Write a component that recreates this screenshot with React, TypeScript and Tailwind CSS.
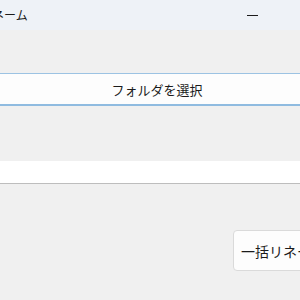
export default function App() {
  return (
    <div
      className="flex h-[300px] w-[300px] flex-col overflow-hidden bg-[#f0f0f0] text-[#1b1b1b]"
      style={{ fontFamily: '"Noto Sans CJK JP", "Noto Sans", sans-serif' }}
    >
      <div className="flex h-[30px] shrink-0 items-center bg-[#eef2f7]">
        <span className="ml-[-44px] whitespace-nowrap text-[12px] leading-none">一括リネーム</span>
        <div className="ml-[219px] h-[1px] w-[11px] bg-[#1b1b1b]" />
      </div>

      <button className="mt-[43px] flex h-[33px] w-full shrink-0 items-center justify-center border-t border-b-2 border-t-[#9cc3e3] border-b-[#8fbbe0] bg-[#fdfdfd] pl-[14px] text-[13px] leading-none">
        フォルダを選択
      </button>

      <div className="mt-[55px] h-[23px] w-full shrink-0 border-b border-[#bdbdbd] bg-white" />

      <div className="mt-[46px] flex justify-end">
        <button className="mr-[-40px] flex h-[41px] w-[107px] shrink-0 items-center rounded-[4px] border border-[#dadada] bg-[#fdfdfd] pl-[7px] text-[14px] leading-none whitespace-nowrap">
          一括リネーム
        </button>
      </div>
    </div>
  );
}
